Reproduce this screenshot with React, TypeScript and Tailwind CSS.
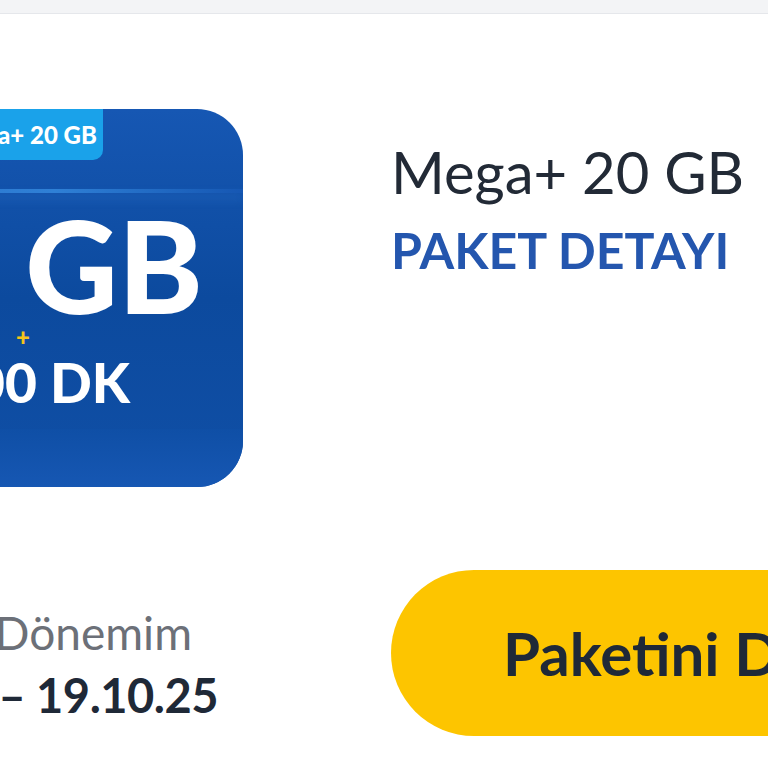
export default function App() {
  return (
    <div className="w-[768px] h-[768px] overflow-hidden bg-white font-['Lato',_sans-serif]">
      <div className="h-[14px] bg-[#f3f4f6] border-b border-[#e5e7eb]" />

      <div className="flex gap-[148px] pt-[95px]">
        <div className="shrink-0 w-[377px] h-[378px] ml-[-134px] rounded-[46px] overflow-hidden bg-gradient-to-b from-[#1657b3] via-[#0c4a9e] to-[#104fa6] flex flex-col">
          <div className="self-start h-[51px] pl-[84px] pr-[6px] flex items-center bg-[#1aa2ea] rounded-br-[10px] text-white text-[24px] font-black whitespace-nowrap">
            Mega+ 20 GB
          </div>
          <div className="mt-[29px] h-[4px] bg-gradient-to-r from-[#2a74cc] via-[#2f80d6] to-[#1657b3] shadow-[0_6px_10px_rgba(60,140,230,0.35)]" />
          <div className="self-end pr-[40px] mt-[8px] text-white font-black text-[128px] leading-none whitespace-nowrap">20 GB</div>
          <div className="pl-[150px] text-[#f5c41a] font-black text-[24px] leading-none mt-[-4px]">+</div>
          <div className="self-end pr-[113px] text-white font-black text-[55px] leading-none mt-[6px] whitespace-nowrap">1000 DK</div>
          <div className="mt-auto h-[58px] bg-gradient-to-b from-[#0f4fa6] to-[#1657b3]" />
        </div>

        <div className="flex flex-col pt-[34px]">
          <div className="text-[#222a36] text-[58px] leading-none whitespace-nowrap">Mega+ 20 GB</div>
          <div className="text-[#2456ae] text-[50px] font-bold leading-none mt-[24px] whitespace-nowrap">PAKET DETAYI</div>
        </div>
      </div>

      <div className="flex gap-[148px] mt-[83px] items-start">
        <div className="shrink-0 w-[377px] ml-[-134px] flex flex-col items-end pt-[40px]">
          <div className="pr-[51px] text-[#6c7078] text-[46px] leading-none whitespace-nowrap">Paket Dönemim</div>
          <div className="pr-[25px] text-[#1f2937] text-[47px] font-bold tracking-[-0.5px] leading-none mt-[16px] whitespace-nowrap">20.09.25 – 19.10.25</div>
        </div>
        <button className="shrink-0 w-[520px] h-[166px] rounded-full bg-[#fdc500] flex items-center pl-[112px] text-[#1f2937] text-[60px] font-bold whitespace-nowrap">
          Paketini Değiştir
        </button>
      </div>
    </div>
  );
}
